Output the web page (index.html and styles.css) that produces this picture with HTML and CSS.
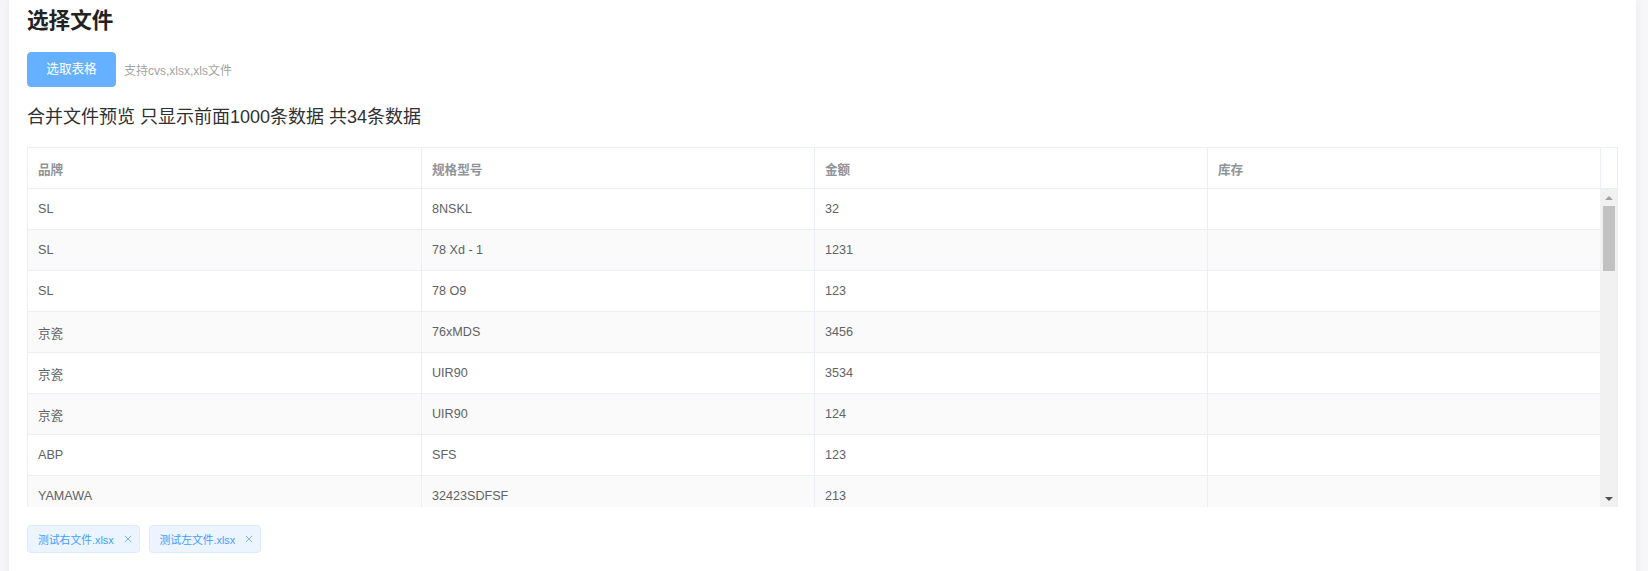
FILE: index.html
```html
<!DOCTYPE html>
<html lang="zh-CN">
<head>
<meta charset="utf-8">
<title>选择文件</title>
<link rel="stylesheet" href="styles.css">
</head>
<body>
<div class="page">
  <div class="card">
    <h2 class="title">选择文件</h2>
    <div class="upload-row">
      <button class="btn" type="button">选取表格</button>
      <span class="tip">支持cvs,xlsx,xls文件</span>
    </div>
    <div class="preview-title">合并文件预览 只显示前面1000条数据 共34条数据</div>
    <div class="table">
      <div class="thead">
        <div class="th c1">品牌</div>
        <div class="th c2">规格型号</div>
        <div class="th c3">金额</div>
        <div class="th c4">库存</div>
        <div class="th gutter"></div>
      </div>
      <div class="tbody">
        <div class="rows">
          <div class="tr"><div class="td c1">SL</div><div class="td c2">8NSKL</div><div class="td c3">32</div><div class="td c4b"></div></div>
          <div class="tr striped"><div class="td c1">SL</div><div class="td c2">78 Xd - 1</div><div class="td c3">1231</div><div class="td c4b"></div></div>
          <div class="tr"><div class="td c1">SL</div><div class="td c2">78 O9</div><div class="td c3">123</div><div class="td c4b"></div></div>
          <div class="tr striped"><div class="td c1">京瓷</div><div class="td c2">76xMDS</div><div class="td c3">3456</div><div class="td c4b"></div></div>
          <div class="tr"><div class="td c1">京瓷</div><div class="td c2">UIR90</div><div class="td c3">3534</div><div class="td c4b"></div></div>
          <div class="tr striped"><div class="td c1">京瓷</div><div class="td c2">UIR90</div><div class="td c3">124</div><div class="td c4b"></div></div>
          <div class="tr"><div class="td c1">ABP</div><div class="td c2">SFS</div><div class="td c3">123</div><div class="td c4b"></div></div>
          <div class="tr striped"><div class="td c1">YAMAWA</div><div class="td c2">32423SDFSF</div><div class="td c3">213</div><div class="td c4b"></div></div>
        </div>
        <div class="vscroll">
          <div class="sb-btn"><span class="arrow-up"></span></div>
          <div class="sb-track"><div class="sb-thumb"></div></div>
          <div class="sb-btn"><span class="arrow-down"></span></div>
        </div>
      </div>
    </div>
    <div class="tags">
      <span class="tag">测试右文件.xlsx<svg class="tag-close" viewBox="0 0 16 16" width="16" height="16"><path d="M4.8 4.8 L11.2 11.2 M11.2 4.8 L4.8 11.2" stroke="#79b8ff" stroke-width="1" fill="none"/></svg></span>
      <span class="tag">测试左文件.xlsx<svg class="tag-close" viewBox="0 0 16 16" width="16" height="16"><path d="M4.8 4.8 L11.2 11.2 M11.2 4.8 L4.8 11.2" stroke="#79b8ff" stroke-width="1" fill="none"/></svg></span>
    </div>
  </div>
</div>
</body>
</html>
```
FILE: styles.css
```css
* { box-sizing: border-box; }
html, body {
  margin: 0;
  padding: 0;
}
body {
  font-family: "Liberation Sans", Arial, "Noto Sans CJK SC", sans-serif;
  background: #f6f6f9;
}
.page {
  height: 571px;
  overflow: hidden;
  padding-left: 9px;
  padding-right: 12px;
}
.card {
  background: #fff;
  min-height: 100%;
  padding: 6px 18px 40px 18px;
  box-shadow: 0 0 8px rgba(0, 0, 0, 0.06);
}
.title {
  margin: 0;
  font-size: 21.6px;
  line-height: 30px;
  font-weight: bold;
  color: #222;
}
.upload-row {
  margin-top: 16px;
  display: flex;
  align-items: center;
}
.btn {
  height: 35px;
  width: 89px;
  padding: 0;
  border: 1px solid #66b1ff;
  background: #66b1ff;
  color: #fff;
  border-radius: 4px;
  font-family: inherit;
  font-size: 12.6px;
  line-height: 1;
  white-space: nowrap;
  text-align: center;
}
.tip {
  margin-left: 8px;
  font-size: 12px;
  color: #a3a3a3;
}
.preview-title {
  margin-top: 18px;
  margin-bottom: 18px;
  font-size: 18px;
  line-height: 24px;
  color: #303133;
}
.table {
  width: 1591px;
  border: 1px solid #ebeef5;
  border-bottom: none;
  font-size: 12.6px;
}
.thead {
  display: flex;
}
.th {
  height: 41px;
  border-right: 1px solid #ebeef5;
  border-bottom: 1px solid #ebeef5;
  padding-left: 10px;
  display: flex;
  align-items: center;
  color: #909399;
  font-weight: bold;
}
.c1 { width: 394px; }
.c2 { width: 393px; }
.c3 { width: 393px; }
.c4 { width: 393px; }
.c4b { width: 392px; }
.th.gutter {
  width: 16px;
  border-right: none;
  padding: 0;
}
.tbody {
  display: flex;
  height: 318px;
  overflow: hidden;
}
.rows {
  width: 1572px;
  overflow: hidden;
}
.tr {
  display: flex;
  height: 41px;
  background: #fff;
}
.tr.striped {
  background: #fafafa;
}
.td {
  border-right: 1px solid #ebeef5;
  border-bottom: 1px solid #ebeef5;
  padding-left: 10px;
  display: flex;
  align-items: center;
  color: #606266;
}
.td.c4b {
  border-right: none;
}
.vscroll {
  width: 17px;
  background: #f1f1f1;
  display: flex;
  flex-direction: column;
}
.sb-btn {
  height: 17px;
  display: flex;
  align-items: center;
  justify-content: center;
}
.arrow-up {
  width: 0;
  height: 0;
  border-left: 4px solid transparent;
  border-right: 4px solid transparent;
  border-bottom: 4px solid #a3a3a3;
}
.arrow-down {
  width: 0;
  height: 0;
  border-left: 4px solid transparent;
  border-right: 4px solid transparent;
  border-top: 4px solid #505050;
}
.sb-track {
  flex: 1;
  padding: 0 2px 0 3px;
}
.sb-thumb {
  height: 65px;
  background: #c1c1c1;
}
.tags {
  margin-top: 18px;
  display: flex;
  gap: 9px;
}
.tag {
  display: inline-flex;
  align-items: center;
  height: 28px;
  padding: 0 3px 0 10px;
  background: #ecf5ff;
  border: 1px solid #d9ecff;
  border-radius: 4px;
  color: #409eff;
  font-size: 10.8px;
}
.tag-close {
  margin-left: 6px;
  display: block;
}
```
